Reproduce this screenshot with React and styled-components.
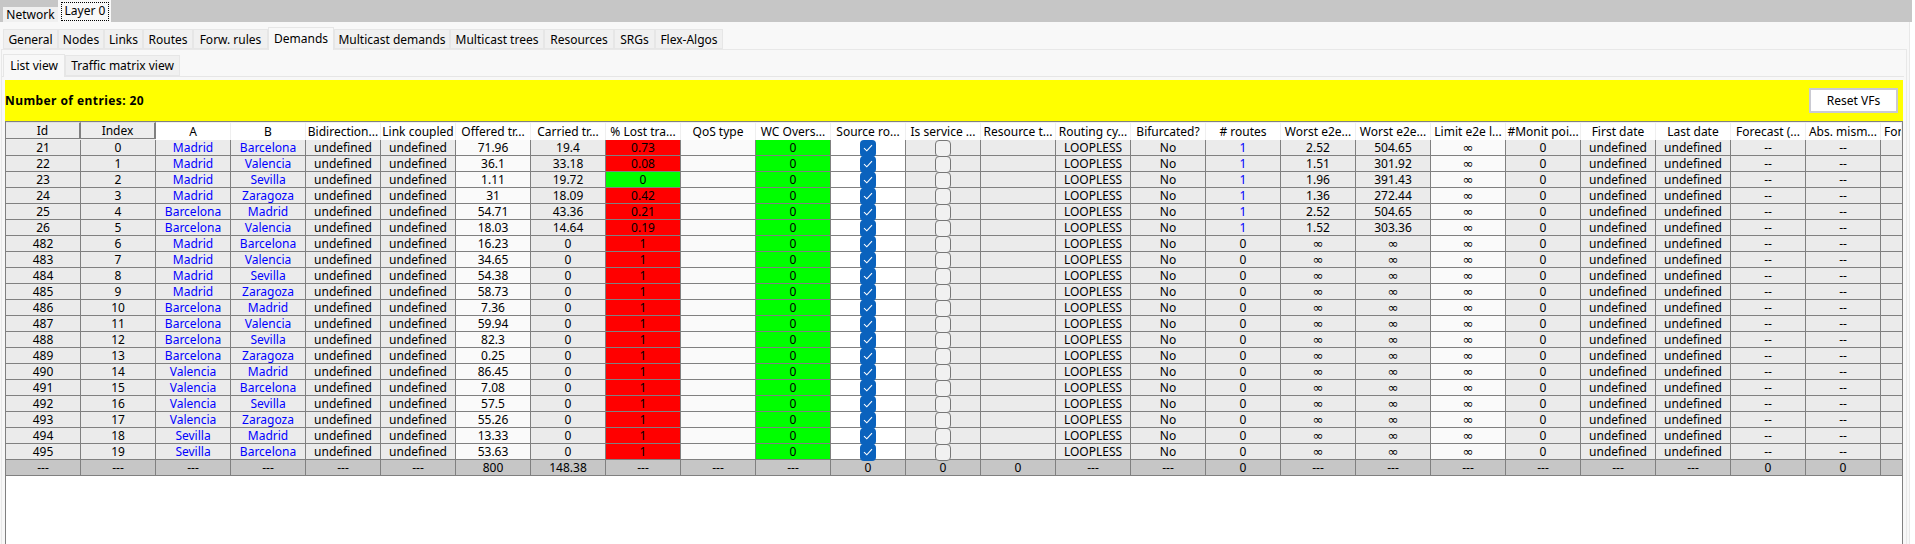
import React from 'react';
import styled, { createGlobalStyle } from 'styled-components';

const Global = createGlobalStyle`
  html, body { margin: 0; padding: 0; background: #fff; }
  body { font-family: "Noto Sans", "Liberation Sans", sans-serif; font-size: 12px; color: #000; }
  * { box-sizing: border-box; }
`;

const Page = styled.div`
  width: 1915px; height: 544px; overflow: hidden; background: #fff;
  display: flex; flex-direction: column;
`;
const NetBar = styled.div`
  width: 1912px; height: 22px; flex: none; background: #c6c6c6;
  display: flex; align-items: flex-end; padding-left: 3px;
`;
const NetTab = styled.div`
  width: 55px; height: 15px; background: #f0f0f0;
  display: flex; align-items: center; justify-content: center;
  line-height: 15px; white-space: nowrap;
`;
const ActiveNetTab = styled.div`
  width: 53px; height: 22px; background: #f8f8f8; padding: 2px 2px 1px 3px;
  display: flex; white-space: nowrap;
`;
const FocusRing = styled.span`
  flex: 1; outline: 1px dotted #000; outline-offset: -1px;
  display: flex; align-items: center; justify-content: center; line-height: 15px;
  padding-bottom: 3px;
`;
const Main = styled.div`
  width: 1910px; flex: 1; min-height: 0; background: #f8f8f8;
  border-right: 1px solid #e8e8e8; padding-top: 5px;
  display: flex; flex-direction: column;
`;
const TabRow = styled.div`
  display: flex; align-items: flex-end; height: 22px; flex: none; padding-left: 3px;
`;
const Tab = styled.div`
  width: ${p => p.$w}px; height: ${p => (p.$active ? 23 : 20)}px;
  margin-bottom: ${p => (p.$active ? -1 : 0)}px;
  position: relative; z-index: ${p => (p.$active ? 1 : 0)};
  background: ${p => (p.$active ? '#f8f8f8' : '#f0f0f0')};
  border: 1px solid #e6e6e6;
  border-bottom: ${p => (p.$active ? 'none' : '1px solid #e6e6e6')};
  display: flex; align-items: center; justify-content: center;
  padding-bottom: ${p => (p.$active ? 2 : 0)}px;
  white-space: nowrap; line-height: 15px;
`;
const Panel = styled.div`
  flex: 1; min-height: 0; margin-left: 1px; width: 1906px;
  border: 1px solid #e8e8e8; border-bottom: none;
  padding-top: 4px; display: flex; flex-direction: column;
`;
const SubRow = styled(TabRow)`
  padding-left: 1px; margin-right: 2px; border-bottom: 1px solid #e6e6e6; height: 23px;
`;
const SubTab = styled(Tab)`
  height: ${p => (p.$active ? 23 : 21)}px;
`;
const Content = styled.div`
  flex: 1; min-height: 0; padding: 3px 3px 0; display: flex; flex-direction: column;
`;
const Banner = styled.div`
  height: 41px; flex: none; background: #ffff00;
  display: flex; align-items: center; justify-content: space-between; padding-right: 5px;
`;
const Count = styled.b`
  font-weight: 700; line-height: 15px; white-space: nowrap; letter-spacing: 0.42px;
`;
const ResetButton = styled.div`
  width: 89px; height: 25px; background: #fff; border: 2px solid #cacad2;
  display: flex; align-items: center; justify-content: center; line-height: 15px;
`;
const Pane = styled.div`
  flex: 1; min-height: 0; background: #fff;
  border: 1px solid #808080; border-bottom: none;
`;
const HeaderRow = styled.div`
  display: flex; height: 18px; background: #efefef;
`;
const HeaderCell = styled.div`
  width: ${p => p.$w}px; flex: none; height: 17px; margin-top: 1px;
  background: #fff; border-right: 1px solid #efefef;
  line-height: 17px; white-space: nowrap; overflow: hidden;
  text-align: ${p => (p.$last ? 'left' : 'center')};
  padding-left: ${p => (p.$last ? 3 : 0)}px;
`;
const FixedHeaderCell = styled.div`
  width: 75px; flex: none; height: 17px;
  background: #ededed; border-right: 2px solid #808080; border-bottom: 1px solid #808080;
  border-top: 1px solid #e0e0e0;
  display: flex; align-items: center; justify-content: center; line-height: 15px;
`;
const Row = styled.div`
  display: flex; height: 16px;
`;
const Cell = styled.div`
  width: ${p => p.$w}px; flex: none; height: 16px;
  background: ${p => p.$bg};
  color: ${p => p.$color || '#000'};
  border-right: ${p => (p.$last ? 'none' : '1px solid #808080')};
  border-bottom: 1px solid #808080;
  display: flex; align-items: center; justify-content: center;
  line-height: 15px; white-space: nowrap;
`;
const Infinity_ = styled.span`
  font-family: "DejaVu Sans", sans-serif; font-size: 13px; line-height: 15px;
`;
const CheckBox = styled.div`
  width: 16px; height: 17px; border-radius: 4px; flex: none; position: relative; z-index: 1;
  margin-bottom: -1px;
  background: ${p => (p.$on ? '#0a62bd' : '#f1f1f1')};
  border: ${p => (p.$on ? 'none' : '1px solid #777')};
  display: flex; align-items: center; justify-content: center;
`;

const COLS = [
  ['Id', '#ebebeb'], ['Index', '#ebebeb'], ['A', '#ebebeb'], ['B', '#ebebeb'],
  ['Bidirection...', '#ebebeb'], ['Link coupled', '#ebebeb'], ['Offered tr...', '#fafafa'],
  ['Carried tr...', '#ebebeb'], ['% Lost tra...', '#ff0000'], ['QoS type', '#fafafa'],
  ['WC Overs...', '#00ff00'], ['Source ro...', '#ffffff'], ['Is service ...', '#ebebeb'],
  ['Resource t...', '#ebebeb'], ['Routing cy...', '#ebebeb'], ['Bifurcated?', '#ebebeb'],
  ['# routes', '#ebebeb'], ['Worst e2e...', '#ebebeb'], ['Worst e2e...', '#ebebeb'],
  ['Limit e2e l...', '#fafafa'], ['#Monit poi...', '#ebebeb'], ['First date', '#ebebeb'],
  ['Last date', '#ebebeb'], ['Forecast (...', '#ebebeb'], ['Abs. mism...', '#ebebeb'], ['For', '#ebebeb'],
];

const DATA = [
  [21, 0, 'Madrid', 'Barcelona', '71.96', '19.4', '0.73', '2.52', '504.65'],
  [22, 1, 'Madrid', 'Valencia', '36.1', '33.18', '0.08', '1.51', '301.92'],
  [23, 2, 'Madrid', 'Sevilla', '1.11', '19.72', '0', '1.96', '391.43'],
  [24, 3, 'Madrid', 'Zaragoza', '31', '18.09', '0.42', '1.36', '272.44'],
  [25, 4, 'Barcelona', 'Madrid', '54.71', '43.36', '0.21', '2.52', '504.65'],
  [26, 5, 'Barcelona', 'Valencia', '18.03', '14.64', '0.19', '1.52', '303.36'],
  [482, 6, 'Madrid', 'Barcelona', '16.23'],
  [483, 7, 'Madrid', 'Valencia', '34.65'],
  [484, 8, 'Madrid', 'Sevilla', '54.38'],
  [485, 9, 'Madrid', 'Zaragoza', '58.73'],
  [486, 10, 'Barcelona', 'Madrid', '7.36'],
  [487, 11, 'Barcelona', 'Valencia', '59.94'],
  [488, 12, 'Barcelona', 'Sevilla', '82.3'],
  [489, 13, 'Barcelona', 'Zaragoza', '0.25'],
  [490, 14, 'Valencia', 'Madrid', '86.45'],
  [491, 15, 'Valencia', 'Barcelona', '7.08'],
  [492, 16, 'Valencia', 'Sevilla', '57.5'],
  [493, 17, 'Valencia', 'Zaragoza', '55.26'],
  [494, 18, 'Sevilla', 'Madrid', '13.33'],
  [495, 19, 'Sevilla', 'Barcelona', '53.63'],
];

const TOTAL = ['---', '---', '---', '---', '---', '---', '800', '148.38', '---', '---', '---', '0', '0', '0', '---', '---', '0', '---', '---', '---', '---', '---', '---', '0', '0', ''];

const BLUE = '#0000ff';

function toCells(d) {
  const [id, idx, a, b, off, car = '0', lost = '1', w1 = '∞', w2 = '∞'] = d;
  const routed = d.length > 5;
  return [
    [id], [idx], [a, BLUE], [b, BLUE], ['undefined'], ['undefined'], [off], [car],
    [lost, null, lost === '0' ? '#00ff00' : '#ff0000'], [''], ['0'], [{ check: true }], [{ check: false }],
    [''], ['LOOPLESS'], ['No'], [routed ? '1' : '0', routed ? BLUE : null], [w1], [w2], ['∞'], ['0'],
    ['undefined'], ['undefined'], ['--'], ['--'], [''],
  ];
}

const Check = () => (
  <svg width="10" height="8" viewBox="0 0 10 8" fill="none">
    <path d="M1 4.2 L3.8 6.8 L9 1.2" stroke="#fff" strokeWidth="1.1" />
  </svg>
);

const renderValue = v => {
  if (v && typeof v === 'object') return <CheckBox $on={v.check}>{v.check && <Check />}</CheckBox>;
  if (v === '∞') return <Infinity_>∞</Infinity_>;
  return v;
};

const width = i => (i === COLS.length - 1 ? 21 : 75);

const topTabs = [
  ['General', 55], ['Nodes', 46], ['Links', 39], ['Routes', 50], ['Forw. rules', 75],
  ['Demands', 66, true], ['Multicast demands', 116], ['Multicast trees', 94],
  ['Resources', 70], ['SRGs', 41], ['Flex-Algos', 68],
];

export default function App() {
  return (
    <Page>
      <Global />
      <NetBar>
        <NetTab>Network</NetTab>
        <ActiveNetTab><FocusRing>Layer 0</FocusRing></ActiveNetTab>
      </NetBar>
      <Main>
        <TabRow>
          {topTabs.map(([t, w, a]) => <Tab key={t} $w={w} $active={a}>{t}</Tab>)}
        </TabRow>
        <Panel>
          <SubRow>
            <SubTab $w={62} $active>List view</SubTab>
            <SubTab $w={115}>Traffic matrix view</SubTab>
          </SubRow>
          <Content>
            <Banner>
              <Count>Number of entries: 20</Count>
              <ResetButton>Reset VFs</ResetButton>
            </Banner>
            <Pane>
              <HeaderRow>
                {COLS.map(([h], i) => i < 2
                  ? <FixedHeaderCell key={i}>{h}</FixedHeaderCell>
                  : <HeaderCell key={i} $w={width(i)} $last={i === COLS.length - 1}>{h}</HeaderCell>)}
              </HeaderRow>
              {DATA.map(d => (
                <Row key={d[0]}>
                  {toCells(d).map(([v, color, bg], i) => (
                    <Cell key={i} $w={width(i)} $last={i === COLS.length - 1} $bg={bg || COLS[i][1]} $color={color}>
                      {renderValue(v)}
                    </Cell>
                  ))}
                </Row>
              ))}
              <Row>
                {TOTAL.map((v, i) => (
                  <Cell key={i} $w={width(i)} $last={i === TOTAL.length - 1} $bg="#c6c6c6">{v}</Cell>
                ))}
              </Row>
            </Pane>
          </Content>
        </Panel>
      </Main>
    </Page>
  );
}
